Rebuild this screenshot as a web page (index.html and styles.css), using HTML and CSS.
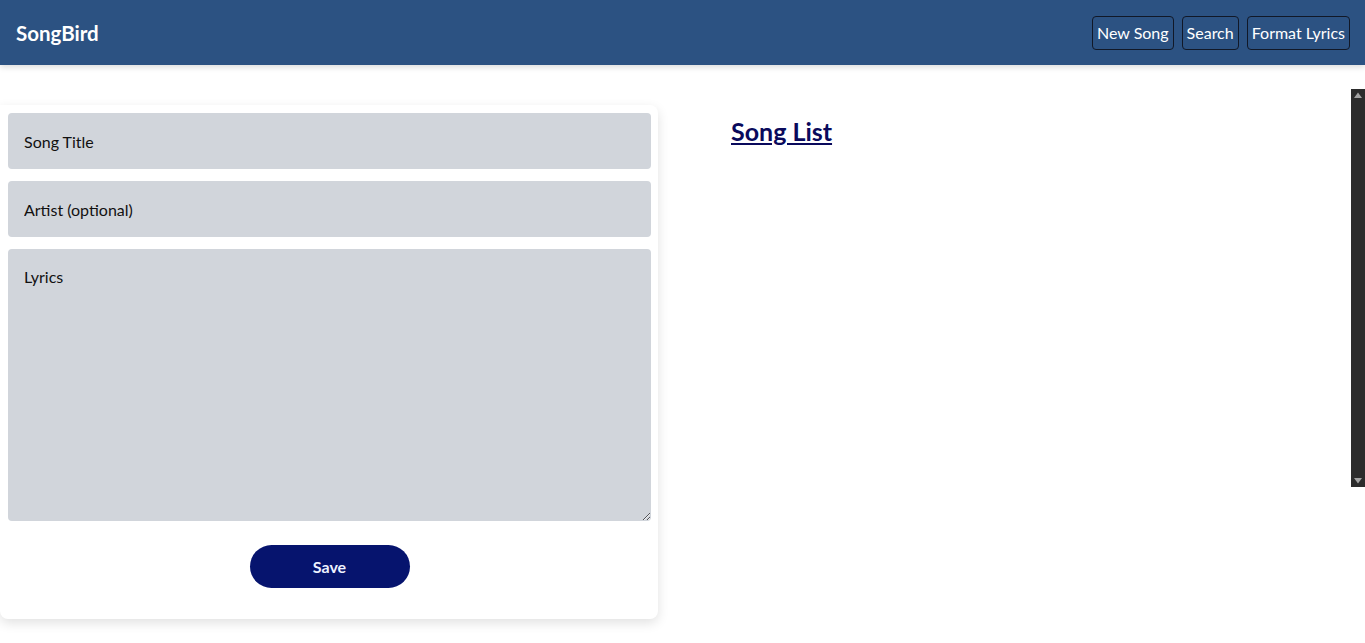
FILE: index.html
```html
<!DOCTYPE html>
<html lang="en">
<head>
<meta charset="utf-8">
<title>SongBird</title>
<link rel="stylesheet" href="styles.css">
</head>
<body>
<header class="topbar">
  <div class="brand">SongBird</div>
  <nav class="actions">
    <button class="nav-btn">New Song</button>
    <button class="nav-btn">Search</button>
    <button class="nav-btn">Format Lyrics</button>
  </nav>
</header>
<main class="layout">
  <section class="editor-col">
    <form class="card">
      <input class="field" type="text" placeholder="Song Title">
      <input class="field" type="text" placeholder="Artist (optional)">
      <textarea class="field lyrics" placeholder="Lyrics"></textarea>
      <div class="save-row"><button type="button" class="save-btn">Save</button></div>
    </form>
  </section>
  <section class="list-panel">
    <div class="list-content">
      <h2 class="list-title">Song List</h2>
    </div>
    <div class="scrollbar" aria-hidden="true">
      <svg class="sb-arrow" width="14" height="14" viewBox="0 0 14 14"><path d="M7 3.5 L11 9 H3 Z" fill="#a3a3a3"/></svg>
      <svg class="sb-arrow" width="14" height="14" viewBox="0 0 14 14"><path d="M3 5 H11 L7 10.5 Z" fill="#a3a3a3"/></svg>
    </div>
  </section>
</main>
</body>
</html>
```
FILE: styles.css
```css
* { box-sizing: border-box; }
html, body { margin: 0; padding: 0; }
body {
  font-family: Lato, "Noto Sans", sans-serif;
  background: #ffffff;
  color: #000;
  height: 643px;
  overflow: hidden;
}
.topbar {
  height: 65px;
  background: #2c5282;
  display: flex;
  align-items: center;
  justify-content: space-between;
  padding: 0 15px 0 16px;
  box-shadow: 0 2px 6px rgba(0,0,0,0.15);
  position: relative;
  z-index: 2;
}
.brand {
  color: #fff;
  font-weight: 700;
  font-size: 20.5px;
}
.actions { display: flex; gap: 8px; }
.nav-btn {
  font-family: inherit;
  font-size: 16px;
  color: #fff;
  background: #2c5282;
  border: 1px solid #111827;
  border-radius: 4px;
  height: 34px;
  padding: 0 4px;
  cursor: pointer;
}
.layout {
  display: grid;
  grid-template-columns: 682px 1fr;
}
.editor-col { padding-top: 40px; }
.card {
  width: 658px;
  background: #fff;
  border-radius: 0 8px 8px 8px;
  box-shadow: 0 4px 12px rgba(0,0,0,0.12);
  padding: 8px 7px 31px 8px;
  display: flex;
  flex-direction: column;
  gap: 12px;
}
.field {
  font-family: inherit;
  font-size: 16px;
  background: #d1d5db;
  border: none;
  border-radius: 4px;
  padding: 16px;
  height: 56px;
  line-height: 24px;
  color: #000;
  outline: none;
  width: 100%;
}
.field::placeholder { color: #111; opacity: 1; }
.lyrics { height: 272px; resize: vertical; display: block; }
.save-row { display: flex; justify-content: center; padding-top: 12px; }
.save-btn {
  font-family: inherit;
  font-weight: 700;
  font-size: 16px;
  color: #eef2ff;
  background: #06146e;
  border: none;
  border-radius: 22px;
  width: 160px;
  height: 43px;
  cursor: pointer;
}
.list-panel {
  margin-top: 24px;
  height: 398px;
  display: flex;
  background: #fff;
}
.list-content {
  flex: 1;
  padding: 26px 0 0 49px;
  overflow: hidden;
}
.scrollbar {
  width: 14px;
  background: #2c2c2c;
  display: flex;
  flex-direction: column;
  justify-content: space-between;
}
.sb-arrow { display: block; }
.list-title {
  margin: 0;
  font-size: 25px;
  font-weight: 700;
  color: #0a0a5c;
  text-decoration: underline;
  line-height: 32px;
}
```
